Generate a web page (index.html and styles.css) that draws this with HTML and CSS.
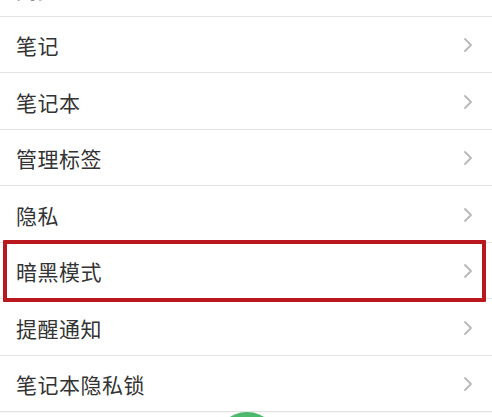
FILE: index.html
```html
<!DOCTYPE html>
<html lang="zh-CN">
<head>
<meta charset="utf-8">
<title>设置</title>
<link rel="stylesheet" href="styles.css">
</head>
<body>
<div class="screen">
  <ul class="menu">
    <li class="row"><span class="label">同步</span><svg class="chev" viewBox="0 0 10 16"><polyline points="2,2 8,8 2,14"/></svg></li>
    <li class="row"><span class="label">笔记</span><svg class="chev" viewBox="0 0 10 16"><polyline points="2,2 8,8 2,14"/></svg></li>
    <li class="row"><span class="label">笔记本</span><svg class="chev" viewBox="0 0 10 16"><polyline points="2,2 8,8 2,14"/></svg></li>
    <li class="row"><span class="label">管理标签</span><svg class="chev" viewBox="0 0 10 16"><polyline points="2,2 8,8 2,14"/></svg></li>
    <li class="row"><span class="label">隐私</span><svg class="chev" viewBox="0 0 10 16"><polyline points="2,2 8,8 2,14"/></svg></li>
    <li class="row highlight"><span class="label">暗黑模式</span><svg class="chev" viewBox="0 0 10 16"><polyline points="2,2 8,8 2,14"/></svg></li>
    <li class="row"><span class="label">提醒通知</span><svg class="chev" viewBox="0 0 10 16"><polyline points="2,2 8,8 2,14"/></svg></li>
    <li class="row"><span class="label">笔记本隐私锁</span><svg class="chev" viewBox="0 0 10 16"><polyline points="2,2 8,8 2,14"/></svg></li>
  </ul>
  <div class="fab"></div>
</div>
</body>
</html>
```
FILE: styles.css
```css
html, body {
  margin: 0;
  padding: 0;
  background: #ffffff;
}
.screen {
  position: relative;
  width: 492px;
  height: 417px;
  overflow: hidden;
  background: #ffffff;
  font-family: "Noto Sans CJK SC", "Noto Sans", sans-serif;
}
.menu {
  list-style: none;
  margin: -40px 0 0 0;
  padding: 0;
}
.row {
  position: relative;
  display: flex;
  align-items: center;
  justify-content: space-between;
  box-sizing: border-box;
  height: 56.5px;
  padding: 2px 19px 0 16px;
  border-bottom: 1.5px solid #e3e3e3;
  box-shadow: 0 1px 1px rgba(0, 0, 0, 0.03);
  background: #ffffff;
}
.label {
  font-size: 21px;
  color: #333333;
  letter-spacing: 0.5px;
}
.chev {
  width: 10px;
  height: 16px;
  fill: none;
  stroke: #b8b8b8;
  stroke-width: 1.8;
  stroke-linecap: round;
  stroke-linejoin: round;
}
.highlight::after {
  content: "";
  position: absolute;
  top: -3px;
  left: 3px;
  right: 6px;
  bottom: -4px;
  border: 4.5px solid #b9191e;
  border-radius: 1px;
  z-index: 2;
}
.fab {
  position: absolute;
  left: 215px;
  top: 412px;
  width: 64px;
  height: 64px;
  border-radius: 50%;
  background: #4cb96c;
  z-index: 3;
}
```
